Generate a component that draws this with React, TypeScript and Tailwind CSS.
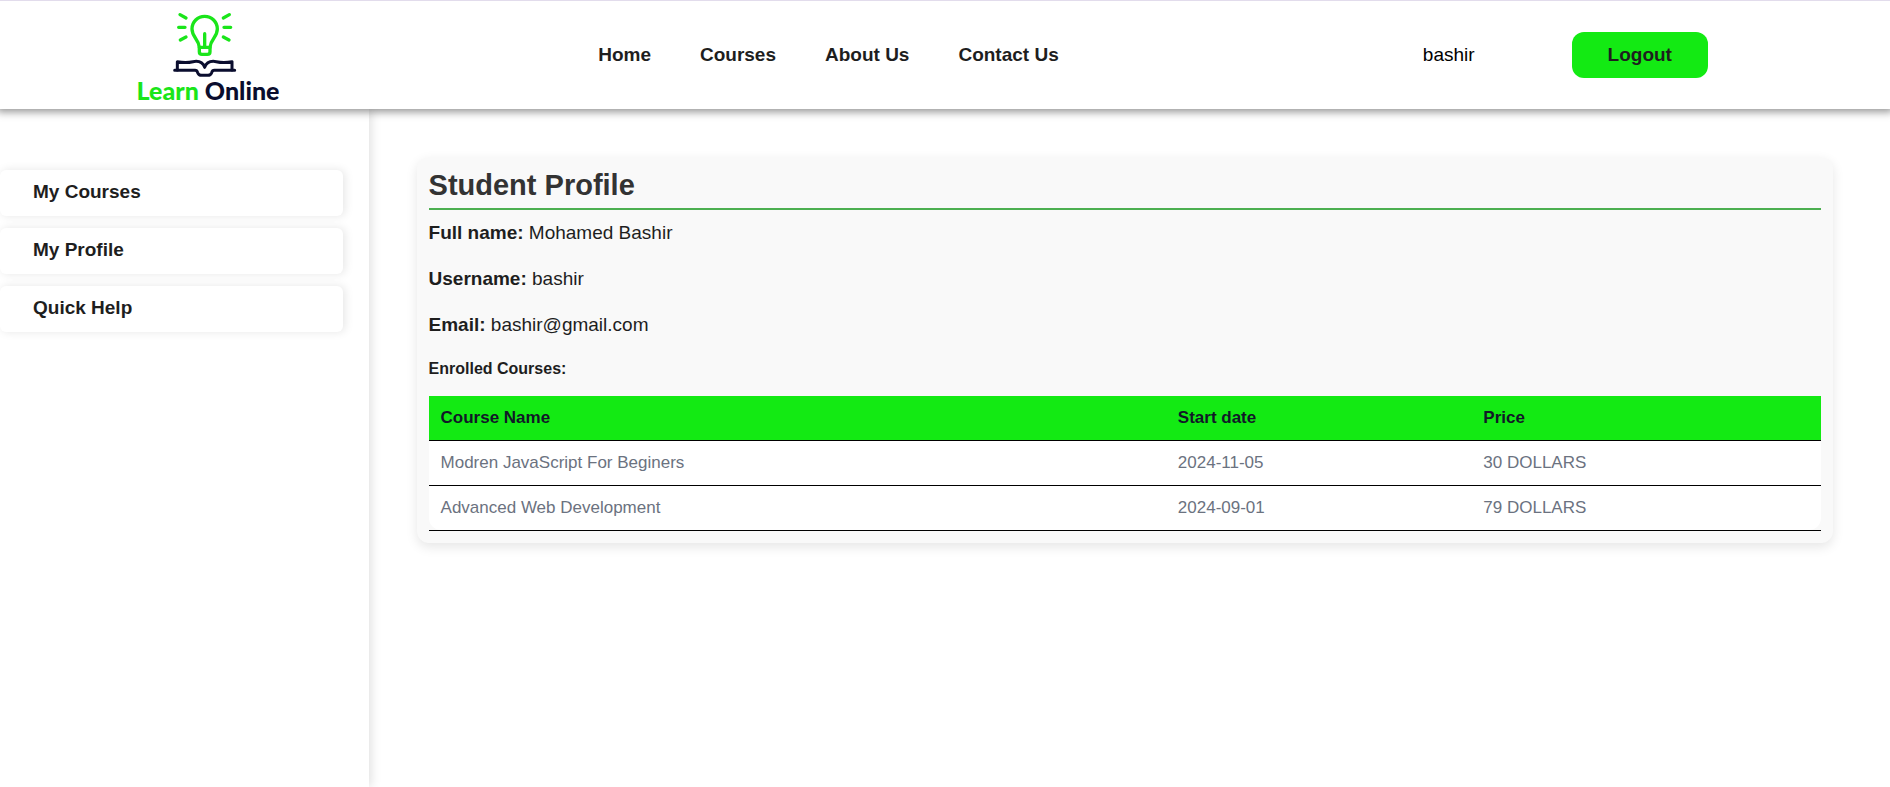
const navLinks = ['Home', 'Courses', 'About Us', 'Contact Us'];
const sideLinks = ['My Courses', 'My Profile', 'Quick Help'];
const details = [
  { label: 'Full name:', value: 'Mohamed Bashir' },
  { label: 'Username:', value: 'bashir' },
  { label: 'Email:', value: 'bashir@gmail.com' },
];
const courses = [
  { name: 'Modren JavaScript For Beginers', start: '2024-11-05', price: '30 DOLLARS' },
  { name: 'Advanced Web Development', start: '2024-09-01', price: '79 DOLLARS' },
];

function Logo() {
  return (
    <a href="#" className="flex w-13 shrink-0 flex-col items-center pt-[3px]">
      <svg viewBox="167 33 198 198" className="size-[66px] shrink-0 overflow-visible" fill="none" strokeLinecap="round" strokeLinejoin="round" aria-hidden="true">
        <g stroke="#1ae51a" strokeWidth="10">
          <path d="M240 142 C238 116 218 112 218 87 A38 38 0 0 1 294 87 C294 112 274 116 272 142" />
          <path d="M240 142 H272 V155 Q272 163 264 163 H248 Q240 163 240 155 Z" />
          <path d="M256 101 V138" />
          <path d="M182 44 L200 54 M178 82 H197 M183 120 L200 111" />
          <path d="M330 44 L312 54 M334 82 H314 M329 120 L312 111" />
        </g>
        <g stroke="#0a0d2e" strokeWidth="9">
          <path d="M166 211 H227 Q233 211 235 218 Q238 226 247 226 H265 Q274 226 277 218 Q279 211 285 211 H346" />
          <path d="M174 210 V185 Q199 190 221 185 Q248 180 256 202 Q264 180 291 185 Q313 190 338 185 V210" />
        </g>
      </svg>
      <span className="mt-px font-[Lato,sans-serif] text-[25px] leading-6 font-black whitespace-nowrap text-[#0a0d2e]">
        <span className="text-[#1ae51a]">Learn</span> Online
      </span>
    </a>
  );
}

export default function App() {
  return (
    <div className="flex min-h-screen flex-col overflow-x-clip bg-white font-['Liberation_Sans',Arial,sans-serif] text-[#1e1e1e]">
      <header className="relative z-10 flex h-[109px] items-center justify-around border-t border-[#e2dcec] bg-white text-[19px] leading-7 shadow-[0_0_8px_3px_rgba(0,0,0,0.42)]">
        <Logo />
        <nav className="flex gap-[49px] pb-px font-bold">
          {navLinks.map((link) => (
            <a key={link} href="#">{link}</a>
          ))}
        </nav>
        <div className="flex items-center gap-[97px]">
          <span className="pb-px text-black">bashir</span>
          <button type="button" className="rounded-xl bg-[#13ea13] px-9 py-[9px] leading-7 font-bold">Logout</button>
        </div>
      </header>

      <div className="flex flex-1">
        <aside className="w-[19.5%] shrink-0 pt-[61px] shadow-[2px_0_10px_rgba(0,0,0,0.13)]">
          <nav className="flex w-[93%] flex-col gap-3">
            {sideLinks.map((link) => (
              <a key={link} href="#" className="rounded-md bg-white pt-2 pb-2.5 pl-[33px] text-[19px] leading-7 font-bold shadow-[2px_0_10px_rgba(0,0,0,0.1)]">
                {link}
              </a>
            ))}
          </nav>
        </aside>

        <main className="min-w-0 flex-1 pt-12 pr-[57px] pl-12">
          <section className="rounded-xl bg-[#f9f9f9] p-3 shadow-[0_4px_12px_rgba(0,0,0,0.1)]">
            <h1 className="border-b-2 border-[#4caf50] pb-[6px] text-[29px] leading-[33px] font-bold text-[#333]">Student Profile</h1>
            <div className="flex flex-col gap-[18px] pt-[9px] text-[19px] leading-7">
              {details.map(({ label, value }) => (
                <p key={label}>
                  <strong>{label}</strong> {value}
                </p>
              ))}
              <h2 className="text-base leading-6 font-bold">Enrolled Courses:</h2>
            </div>
            <div className="mt-[15px] border-b border-black">
              <div className="overflow-hidden rounded-b-xl">
                <table className="w-full border-separate border-spacing-0 text-left text-[17px] leading-6">
                  <thead className="bg-[#13ea13] text-[#111827]">
                    <tr>
                      <th className="border-b border-black px-3 py-2.5">Course Name</th>
                      <th className="border-b border-black px-3 py-2.5">Start date</th>
                      <th className="border-b border-black px-3 py-2.5">Price</th>
                    </tr>
                  </thead>
                  <tbody className="bg-white text-[#6b7280] [&>tr:not(:last-child)>td]:border-b [&>tr:not(:last-child)>td]:border-black">
                    {courses.map((course) => (
                      <tr key={course.name}>
                        <td className="px-3 py-2.5">{course.name}</td>
                        <td className="px-3 py-2.5">{course.start}</td>
                        <td className="px-3 py-2.5">{course.price}</td>
                      </tr>
                    ))}
                  </tbody>
                </table>
              </div>
            </div>
          </section>
        </main>
      </div>
    </div>
  );
}
